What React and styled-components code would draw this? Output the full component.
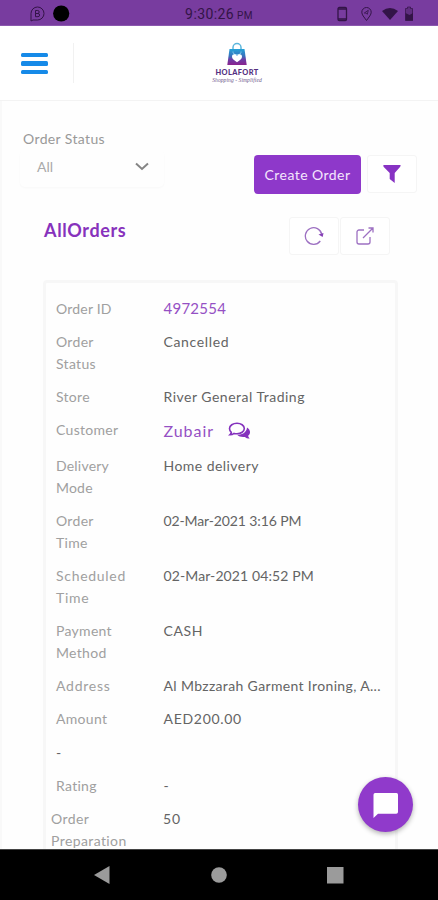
import React from "react";
import styled, { createGlobalStyle } from "styled-components";

const GlobalStyle = createGlobalStyle`
  *, *::before, *::after { box-sizing: border-box; }
  body { margin: 0; background: #fefefe; }
  button { border: 0; padding: 0; background: none; font: inherit; }
`;

const Phone = styled.div`
  position: relative;
  display: flex;
  flex-direction: column;
  width: 438px;
  height: 900px;
  overflow: hidden;
  background: #fefefe;
  font-family: Lato, sans-serif;
  font-size: 14px;
  line-height: 22px;
  color: #666;
`;

const StatusBar = styled.div`
  flex: none;
  display: grid;
  grid-template-columns: 1fr auto 1fr;
  align-items: center;
  height: 26px;
  padding: 1px 24px 0 30px;
  background: #783c9f;
  border-bottom: 1px solid #8b58ae;
  color: #331447;
`;

const StatusIcons = styled.div`
  display: flex;
  align-items: center;
  gap: 8px;
  justify-content: ${(p) => (p.$end ? "flex-end" : "flex-start")};
  svg { display: block; }
`;

const Clock = styled.div`
  padding: 3px 6px 0 0;
  font: 14px/20px Roboto, sans-serif;
  letter-spacing: 0.4px;
  small { font-size: 10px; margin-left: 3px; }
`;

const Header = styled.header`
  flex: none;
  display: flex;
  align-items: center;
  height: 75px;
  padding-left: 21px;
  background: #fff;
  border-bottom: 1px solid #f3f3f3;
`;

const MenuButton = styled.button`
  display: flex;
  flex-direction: column;
  gap: 4px;
  width: 27px;
  height: 22px;
  margin-top: 1px;
`;

const MenuLine = styled.span`
  width: 27px;
  height: 4.6px;
  border-radius: 1.5px;
  background: #168ae8;
`;

const Separator = styled.div`
  width: 1px;
  height: 40px;
  margin-left: 25px;
  background: #f1f1f1;
`;

const Brand = styled.div`
  display: flex;
  flex-direction: column;
  align-items: center;
  width: 56px;
  height: 43px;
  margin-left: 135px;
`;

const BrandName = styled.div`
  margin-top: 3px;
  font: 900 7.4px/8px Lato, sans-serif;
  letter-spacing: 0.4px;
  color: #54307f;
  white-space: nowrap;
`;

const Tagline = styled.div`
  font: italic 5.6px/7px "Liberation Serif", serif;
  letter-spacing: 0.05px;
  color: #705a8c;
  white-space: nowrap;
`;

const Content = styled.main`
  flex: 1;
  min-height: 0;
  overflow: hidden;
  border-left: 2px solid #f9f9f9;
`;

const Filters = styled.section`
  display: flex;
  height: 98px;
  padding: 27px 20px 0 18px;
`;

const StatusField = styled.div`
  width: 144px;
`;

const FieldLabel = styled.div`
  padding-left: 3px;
  line-height: 22px;
  letter-spacing: 0.37px;
  color: #999;
`;

const Select = styled.div`
  display: flex;
  justify-content: space-between;
  align-items: center;
  height: 37px;
  padding: 0 15px 4px 17px;
  border-radius: 5px;
  box-shadow: 0 1px 2px #f8f8f8;
  color: #aaa;
  svg { display: block; }
`;

const Actions = styled.div`
  display: flex;
  gap: 6px;
  margin: 27px 0 0 90px;
`;

const CreateButton = styled.button`
  width: 107px;
  height: 39px;
  border-radius: 4px;
  background: #8e38ca;
  color: #f4e6fd;
  letter-spacing: 0.45px;
`;

const IconButton = styled.button`
  display: flex;
  align-items: center;
  justify-content: center;
  width: 50px;
  height: 38px;
  border: 1px solid #f5f5f5;
  border-radius: 3px;
  background: #fff;
`;

const ListHeader = styled.section`
  display: flex;
  justify-content: space-between;
  height: 81px;
  padding: 18px 48px 0 42px;
`;

const Title = styled.h1`
  margin: 2px 0 0;
  font-size: 18px;
  line-height: 22px;
  font-weight: 700;
  letter-spacing: 0.65px;
  color: #8732bc;
`;

const Tools = styled.div`
  display: flex;
  gap: 1px;
`;

const Card = styled.section`
  width: 355px;
  height: 620px;
  margin-left: 41px;
  padding: 15px 10px 0;
  border: 3px solid #f7f7f7;
  border-radius: 4px;
  background: #fefefe;
`;

const Row = styled.div`
  display: grid;
  grid-template-columns: 107.5px 1fr;
  min-height: ${(p) => p.$height || 22}px;
  margin: 0 0 ${(p) => p.$gap || 11}px;
  &:last-child { grid-template-columns: 112px 1fr; margin-left: -5px; }
`;

const Label = styled.div`
  width: ${(p) => p.$width || 72}px;
  color: ${(p) => (p.$dark ? "#646464" : "#a0a0a0")};
  letter-spacing: ${(p) => p.$track ?? 0.3}px;
`;

const Value = styled.div`
  display: flex;
  align-items: center;
  align-self: start;
  height: 22px;
  margin-top: ${(p) => p.$drop || 0}px;
  white-space: nowrap;
  color: ${(p) => (p.$link ? "#9550c4" : "#646464")};
  font-size: ${(p) => p.$size || 14}px;
  letter-spacing: ${(p) => p.$track || 0}px;
  svg { display: block; margin: 0 0 0 14px; }
`;

const ChatButton = styled.button`
  position: absolute;
  left: 358px;
  top: 777px;
  display: flex;
  align-items: center;
  justify-content: center;
  width: 55px;
  height: 55px;
  border-radius: 50%;
  background: #903acb;
  box-shadow: 0 2px 5px rgba(0, 0, 0, 0.3);
`;

const NavBar = styled.nav`
  flex: none;
  display: flex;
  align-items: center;
  height: 51px;
  padding-left: 93px;
  gap: 98.5px;
  background: #000;
  border-top: 1px solid #444;
  svg { display: block; }
`;

const orders = [
  { label: "Order ID", labelTrack: 0.2, value: "4972554", link: true, size: 15, track: 0.25, drop: -1 },
  { label: "Order Status", value: "Cancelled", track: 0.65 },
  { label: "Store", value: "River General Trading", track: 0.5 },
  { label: "Customer", value: "Zubair", link: true, size: 16, track: 0.95, chat: true, height: 25, drop: 1 },
  { label: "Delivery Mode", labelTrack: 0.2, value: "Home delivery", track: 0.45 },
  { label: "Order Time", labelWidth: 60, value: "02-Mar-2021 3:16 PM", track: -0.12 },
  { label: "Scheduled Time", labelTrack: 0.7, labelWidth: 78, value: "02-Mar-2021 04:52 PM", track: 0.1 },
  { label: "Payment Method", value: "CASH", track: 0.6 },
  { label: "Address", labelTrack: 0.75, value: "Al Mbzzarah Garment Ironing, A...", track: 0.35 },
  { label: "Amount", value: "AED200.00", track: 0.7, gap: 12 },
  { label: "-", value: "", dark: true },
  { label: "Rating", value: "-" },
  { label: "Order Preparation", labelWidth: 80, labelTrack: 0.4, value: "50", track: 0.9 },
];

const ChatBubbles = () => (
  <svg width="23" height="19" viewBox="0 0 23 19" fill="none">
    <path d="M19 5.500c3.800 2.400 3.900 6.200 1.100 8.300.2 1.200.9 2 1.700 2.700-2 .1-3.600-.5-4.800-1.600-3 .5-6.100-.2-7.900-2.100 5 .2 9.600-2.500 9.900-7.300Z" fill="#8431bd" />
    <path d="M9 1.200c4 0 7.300 2.300 7.300 5.300s-3.300 5.300-7.300 5.300c-1 0-2-.1-2.900-.4-1.100.9-2.400 1.400-4.200 1.400.8-.8 1.300-1.500 1.400-2.500C2.300 9.400 1.500 8 1.500 6.500c0-3 3.500-5.300 7.500-5.300Z" stroke="#8431bd" strokeWidth="1.600" />
  </svg>
);

const BagLogo = () => (
  <svg width="22" height="24" viewBox="0 0 22 24">
    <defs>
      <linearGradient id="bag" x1="0" y1="0" x2="0" y2="1">
        <stop offset="0" stopColor="#24a2d8" />
        <stop offset=".45" stopColor="#3970bb" />
        <stop offset=".65" stopColor="#6b3ea6" />
        <stop offset="1" stopColor="#8b228e" />
      </linearGradient>
    </defs>
    <path d="M7 9V5.500a4 4 0 0 1 8 0V9" fill="none" stroke="#5cb6dc" strokeWidth="1.500" />
    <path d="M3.500 7h15l2.200 16H1.300Z" fill="url(#bag)" />
    <path d="M7 9.500v.8a4 2.500 0 0 0 8 0v-.8" fill="none" stroke="#80cbea" strokeWidth="1" />
    <path d="M11 20.200c-3-2-5-3.600-5-5.500 0-2.700 3.600-3.200 5-.7 1.400-2.500 5-2 5 .7 0 1.900-2 3.500-5 5.500Z" fill="#fff" />
  </svg>
);

export default function App() {
  return (
    <Phone>
      <GlobalStyle />
      <StatusBar>
        <StatusIcons>
          <svg width="15" height="16" viewBox="0 0 15 16" fill="none" stroke="currentColor" strokeWidth="1">
            <path d="M1 15V7.500A6.500 6.500 0 1 1 7.500 14H3Z" />
            <path d="M5.500 4.500h2.200a1.500 1.500 0 0 1 0 3H5.500Zm0 3h2.500a1.600 1.600 0 0 1 0 3.200H5.500Z" />
          </svg>
          <svg width="17" height="17"><circle cx="8.200" cy="8.500" r="8.100" fill="#000" /></svg>
        </StatusIcons>
        <Clock>9:30:26<small>PM</small></Clock>
        <StatusIcons $end>
          <svg width="82" height="16" viewBox="0 0 82 16" fill="none" stroke="currentColor">
            <rect x="6" y="1.500" width="8.500" height="13" rx="1.300" strokeWidth="1.300" />
            <path d="M6 3h8.500M6 13h8.500" strokeWidth="1.500" />
            <path d="M34.500 14.500c-2.500-3.500-4.700-5.700-4.700-8.300a4.700 4.700 0 0 1 9.400 0c0 2.600-2.200 4.800-4.700 8.300Z" />
            <path d="m32.300 7 4-2.700-1 4-1-1.200Z" strokeWidth=".8" />
            <path d="M50 5q8-6 16 0l-8 9Z" fill="currentColor" stroke="none" />
            <path d="M73.500 2.500h2V1h3.500v1.500h2v12h-7.500Z" fill="currentColor" fillOpacity=".35" stroke="none" />
            <path d="M73.500 7l4 2 3.500-2v7.500h-7.500Z" fill="currentColor" stroke="none" />
            <path d="M73.500 14.500V2.500h2V1h3v1.500h2v12Z" strokeWidth=".7" />
          </svg>
        </StatusIcons>
      </StatusBar>

      <Header>
        <MenuButton aria-label="Menu"><MenuLine /><MenuLine /><MenuLine /></MenuButton>
        <Separator />
        <Brand>
          <BagLogo />
          <BrandName>HOLAFORT</BrandName>
          <Tagline>Shopping - Simplified</Tagline>
        </Brand>
      </Header>

      <Content>
        <Filters>
          <StatusField>
            <FieldLabel>Order Status</FieldLabel>
            <Select>
              <span>All</span>
              <svg width="14" height="9" viewBox="0 0 14 9" fill="none" stroke="#858585" strokeWidth="2"><path d="m1 1.500 6 5.500 6-5.500" /></svg>
            </Select>
          </StatusField>
          <Actions>
            <CreateButton>Create Order</CreateButton>
            <IconButton aria-label="Filter">
              <svg width="18" height="20" viewBox="0 0 18 20" fill="#8732c3"><path d="M.5 1h17c.3 1-.2 1.700-.7 2.200L11.700 9v10l-5-4V9L1 3.200C.5 2.700.1 2 .5 1Z" /></svg>
            </IconButton>
          </Actions>
        </Filters>

        <ListHeader>
          <Title>AllOrders</Title>
          <Tools>
            <IconButton aria-label="Refresh">
              <svg width="20" height="20" viewBox="0 0 20 20" fill="none" stroke="#9d70c2" strokeWidth="1.300">
                <path d="M16.300 15A8.300 8.300 0 1 1 17.800 8.500" />
                <path d="m14.500 8.500 5-1.500-.8 4Z" fill="#8741b7" stroke="none" />
              </svg>
            </IconButton>
            <IconButton aria-label="Export">
              <svg width="20" height="20" viewBox="0 0 20 20" fill="none" stroke="#9d70c2" strokeWidth="1.300">
                <path d="M9 4H4a2 2 0 0 0-2 2v10a2 2 0 0 0 2 2h9a2 2 0 0 0 2-2v-5M8 12 17.500 2.500M13.500 2H18v4.500" />
              </svg>
            </IconButton>
          </Tools>
        </ListHeader>

        <Card>
          {orders.map((o) => (
            <Row key={o.label} $height={o.height} $gap={o.gap}>
              <Label $width={o.labelWidth} $track={o.labelTrack} $dark={o.dark}>{o.label}</Label>
              <Value $link={o.link} $size={o.size} $track={o.track} $drop={o.drop}>
                {o.value}
                {o.chat && <ChatBubbles />}
              </Value>
            </Row>
          ))}
        </Card>
      </Content>

      <NavBar>
        <svg width="17" height="19" viewBox="0 0 17 19"><path d="M16.500 0v18L1 9Z" fill="#9b9b9b" /></svg>
        <svg width="20" height="18" viewBox="0 0 20 18"><circle cx="10" cy="9" r="7.800" fill="#9b9b9b" /></svg>
        <svg width="17" height="17"><rect width="16.500" height="16.500" fill="#9b9b9b" /></svg>
      </NavBar>

      <ChatButton aria-label="Chat">
        <svg width="26" height="26" viewBox="0 0 26 26"><path d="M2.500 1h21A1.800 1.800 0 0 1 25 2.800V20a1.800 1.800 0 0 1-1.800 1.800H5L.5 26V2.800A1.800 1.800 0 0 1 2.500 1Z" fill="#fff" /></svg>
      </ChatButton>
    </Phone>
  );
}
